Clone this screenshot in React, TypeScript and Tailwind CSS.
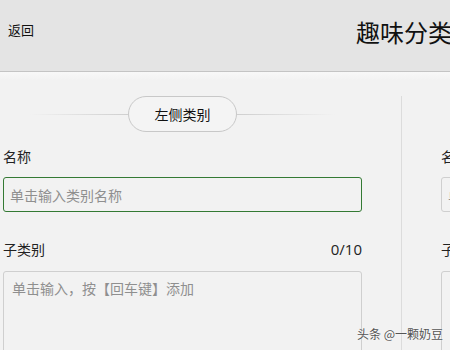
import React from "react";

const font = { fontFamily: '"Noto Sans CJK SC", "Noto Sans", sans-serif' };

const FieldColumn = ({ focused }: { focused?: boolean }) => (
  <div className="flex flex-col">
    {/* Name */}
    <div className="mt-[50px] text-[14px] leading-[20px] text-[#222]">名称</div>
    <input
      className={
        focused
          ? "mt-[11px] h-[35px] w-full rounded-[3px] border border-[#347a34] bg-[#f2f2f2] px-[6px] text-[14px] text-[#333] outline-none placeholder:text-[#8f8f8f]"
          : "mt-[11px] h-[35px] w-full rounded-[3px] border border-[#cfcfcf] bg-[#f2f2f2] px-[6px] text-[14px] text-[#333] outline-none placeholder:text-[#8f8f8f]"
      }
      placeholder="单击输入类别名称"
      style={font}
    />

    {/* Sub category */}
    <div className="mt-[27px] flex items-center justify-between text-[14px] leading-[20px] text-[#222]">
      <span>子类别</span>
      <span className="text-[15px]" style={{ fontFamily: '"Open Sans", "Noto Sans", sans-serif' }}>0/10</span>
    </div>
    <textarea
      className="mt-[12px] h-[120px] w-full resize-none rounded-[3px] border border-[#cfcfcf] bg-[#f2f2f2] px-[8px] py-[6px] text-[14px] leading-[20px] text-[#333] outline-none placeholder:text-[#8f8f8f]"
      placeholder="单击输入，按【回车键】添加"
      style={font}
    />
  </div>
);

export default function App() {
  return (
    <div className="relative h-[350px] w-[450px] overflow-hidden bg-[#f2f2f2]" style={font}>
      {/* Header */}
      <div className="flex h-[72px] items-start justify-between border-b border-[#c4c4c4] bg-[#e4e4e4]">
        <span className="ml-[8px] mt-[21px] text-[13px] leading-[18px] text-[#111]">返回</span>
        <span className="mr-[-2px] mt-[17px] whitespace-nowrap text-[24px] leading-[30px] text-[#111]">趣味分类</span>
      </div>
      <div className="h-[8px] bg-gradient-to-b from-[#f8f8f8] to-[#f2f2f2]" />

      {/* Body */}
      <div className="flex">
        {/* Left column */}
        <div className="ml-[3px] w-[359px] shrink-0">
          <div className="mt-[16px] flex h-[36px] items-center justify-center">
            <div className="h-px w-[98px] bg-gradient-to-r from-transparent to-[#cfcfcf]" />
            <div className="flex h-[36px] w-[109px] items-center justify-center rounded-full border border-[#c8c8c8] bg-[#f4f4f4] text-[14px] text-[#111]">
              左侧类别
            </div>
            <div className="h-px w-[98px] bg-gradient-to-l from-transparent to-[#cfcfcf]" />
          </div>
          <div className="-mt-[36px]">
            <FieldColumn focused />
          </div>
        </div>

        {/* Divider */}
        <div className="ml-[39px] mt-[16px] h-[300px] w-px shrink-0 bg-[#dcdcdc]" />

        {/* Right column */}
        <div className="ml-[39px] w-[359px] shrink-0 pt-[16px]">
          <FieldColumn />
        </div>
      </div>

      {/* Watermark */}
      <div className="absolute left-[357px] top-[326px] whitespace-nowrap text-[12px] leading-[16px] text-[#555] [text-shadow:0_0_2px_#fff]">
        头条 @一颗奶豆
      </div>
    </div>
  );
}
